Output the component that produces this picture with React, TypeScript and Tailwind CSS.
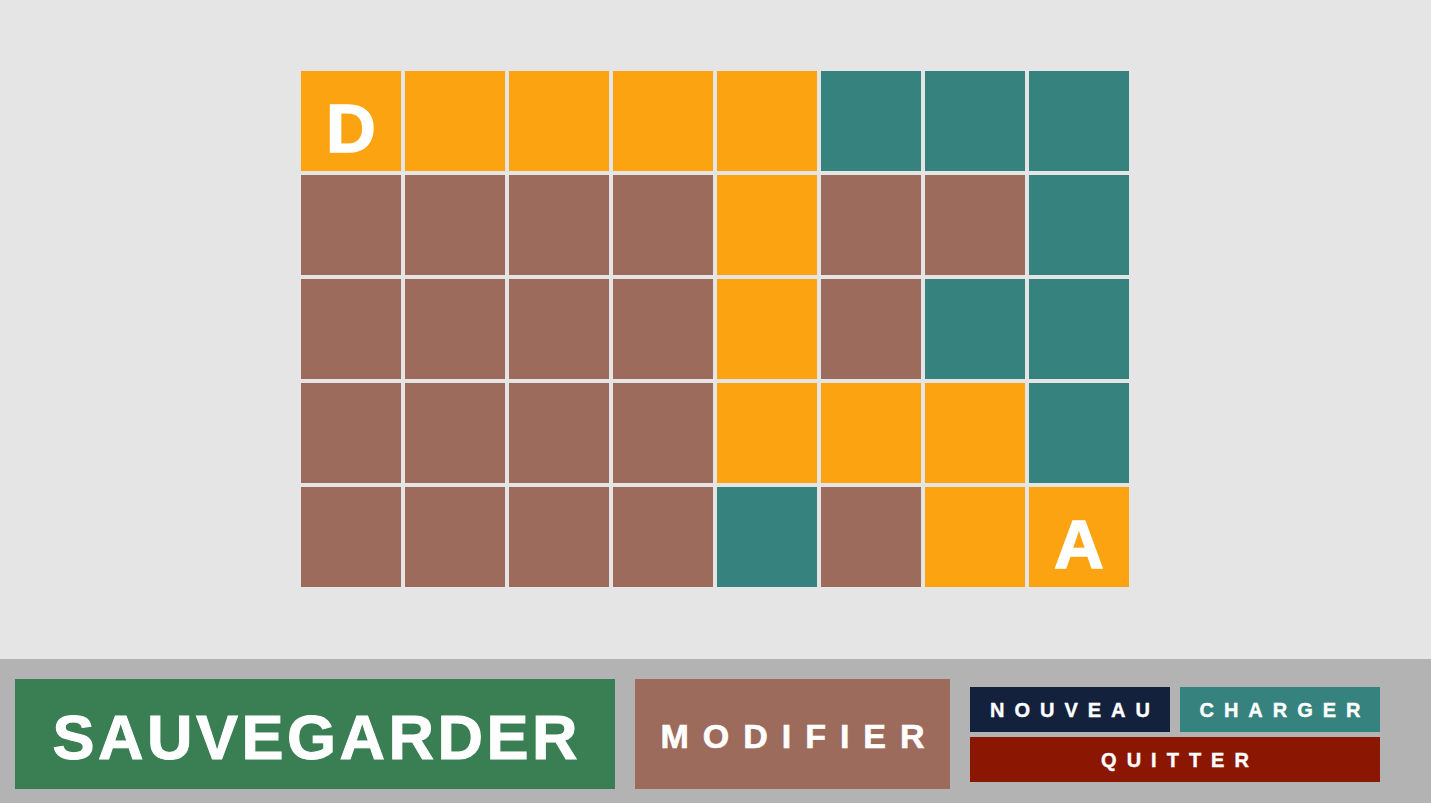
const ORANGE = "bg-[#fca311]";
const TEAL = "bg-[#36827f]";
const BROWN = "bg-[#9d6b5c]";

type Cell = "o" | "t" | "b";

const grid: Cell[][] = [
  ["o", "o", "o", "o", "o", "t", "t", "t"],
  ["b", "b", "b", "b", "o", "b", "b", "t"],
  ["b", "b", "b", "b", "o", "b", "t", "t"],
  ["b", "b", "b", "b", "o", "o", "o", "t"],
  ["b", "b", "b", "b", "t", "b", "o", "o"],
];

const colorOf: Record<Cell, string> = { o: ORANGE, t: TEAL, b: BROWN };

function Tile({ kind, label }: { kind: Cell; label?: string }) {
  return (
    <div
      className={`${colorOf[kind]} w-[100px] h-[100px] flex items-center justify-center text-white font-bold text-[69px] leading-none pt-[14px] [-webkit-text-stroke:1.5px_white]`}
    >
      {label}
    </div>
  );
}

export default function App() {
  const last = grid.length - 1;
  return (
    <div className="w-full h-[803px] flex flex-col bg-[#e5e5e5] font-['Liberation_Sans',Arial,sans-serif] overflow-hidden">
      <div className="h-[659px] flex items-center justify-center pr-[1px] pb-[1px]">
        <div className="grid grid-cols-[repeat(8,100px)] gap-[4px]">
          {grid.map((row, r) =>
            row.map((c, i) => (
              <Tile
                key={`${r}-${i}`}
                kind={c}
                label={r === 0 && i === 0 ? "D" : r === last && i === 7 ? "A" : undefined}
              />
            ))
          )}
        </div>
      </div>

      <div className="flex-1 bg-[#b3b3b3] flex items-center gap-[20px] pl-[15px] pt-[6px]">
        <button className="w-[600px] h-[110px] bg-[#3a7e54] text-white font-bold text-[63px] leading-none tracking-[3.5px] flex items-center justify-center pt-[6px] [-webkit-text-stroke:1px_white]">
          <span className="pl-[3.5px]">SAUVEGARDER</span>
        </button>
        <button className="w-[315px] h-[110px] bg-[#9d6b5c] text-white font-bold text-[34px] leading-none tracking-[14px] flex items-center justify-center pt-[3px] [-webkit-text-stroke:0.6px_white]">
          <span className="pl-[14px]">MODIFIER</span>
        </button>
        <div className="w-[410px] flex flex-col gap-[5px]">
          <div className="flex gap-[10px]">
            <button className="w-[200px] h-[45px] bg-[#14213d] text-white font-bold text-[20px] leading-none tracking-[10px] flex items-center justify-center pt-[2px] [-webkit-text-stroke:0.4px_white]">
              <span className="pl-[10px]">NOUVEAU</span>
            </button>
            <button className="w-[200px] h-[45px] bg-[#36827f] text-white font-bold text-[20px] leading-none tracking-[10px] flex items-center justify-center pt-[2px] [-webkit-text-stroke:0.4px_white]">
              <span className="pl-[10px]">CHARGER</span>
            </button>
          </div>
          <button className="w-[410px] h-[45px] bg-[#8b1601] text-white font-bold text-[20px] leading-none tracking-[10px] flex items-center justify-center pt-[2px] [-webkit-text-stroke:0.4px_white]">
            <span className="pl-[10px]">QUITTER</span>
          </button>
        </div>
      </div>
    </div>
  );
}
